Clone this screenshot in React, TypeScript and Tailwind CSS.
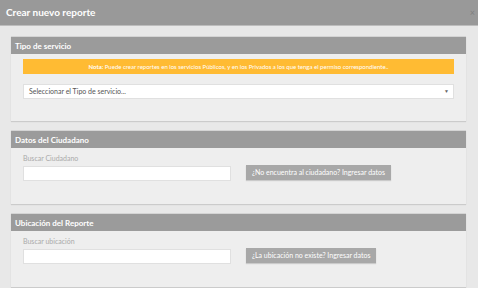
import { useState } from "react";

const font = { fontFamily: "Lato, 'Open Sans', sans-serif" };

function Panel({ title, children }: { title: string; children: React.ReactNode }) {
  return (
    <div className="border-t border-[#d4d4d4] bg-[#eeeeee] shadow-[0_1px_1px_rgba(0,0,0,0.12)]">
      <div className="flex h-[17px] items-center bg-[#9b9b9b] px-[4px] text-[8px] font-bold text-white">{title}</div>
      {children}
    </div>
  );
}

function SearchRow({ label, button }: { label: string; button: string }) {
  const [value, setValue] = useState("");
  return (
    <div className="px-[12px] pb-[23px] pt-[4px]">
      <p className="h-[12px] text-[7px] leading-[12px] text-[#aaaaaa]">{label}</p>
      <div className="mt-[2px] flex items-start gap-[15px]">
        <input
          className="h-[15px] w-[208px] border border-[#e0e0e0] bg-white px-[4px] text-[7px] outline-none"
          value={value}
          onChange={(event) => setValue(event.target.value)}
        />
        <button
          className="-mt-[1px] h-[15px] bg-[#a8a8a8] px-[6px] text-[7px] text-white shadow-[0_1px_1px_rgba(0,0,0,0.15)]"
          type="button"
        >
          {button}
        </button>
      </div>
    </div>
  );
}

export default function App() {
  return (
    <div className="h-[288px] w-[478px] overflow-hidden bg-[#e8e8e8]" style={font}>
      <div className="flex h-[26px] items-center justify-between border-b border-[#bdbdbd] bg-[#999999] pl-[6px] pr-[3px]">
        <h1 className="text-[10px] font-bold text-white">Crear nuevo reporte</h1>
        <span className="text-[9px] leading-none text-[#808080]">×</span>
      </div>

      <div className="mr-[12px] ml-[11px] mt-[10px] flex flex-col gap-[9px]">
        <Panel title="Tipo de servicio">
          <div className="px-[12px] pb-[22px] pt-[5px]">
            <div className="flex h-[15px] items-center justify-center bg-[#ffbb33] text-[6px] text-white">
              <span className="font-bold">Nota:</span>&nbsp;Puede crear reportes en los servicios Públicos, y en los
              Privados a los que tenga el permiso correspondiente..
            </div>
            <div className="mt-[10px] flex h-[15px] items-center justify-between border border-[#e0e0e0] bg-white pl-[5px] pr-[4px] text-[7px] text-[#555555]">
              <span>Seleccionar el Tipo de servicio...</span>
              <span className="text-[5px] text-[#666666]">▼</span>
            </div>
          </div>
        </Panel>

        <Panel title="Datos del Ciudadano">
          <SearchRow label="Buscar Ciudadano" button="¿No encuentra al ciudadano? Ingresar datos" />
        </Panel>

        <Panel title="Ubicación del Reporte">
          <SearchRow label="Buscar ubicación" button="¿La ubicación no existe? Ingresar datos" />
        </Panel>
      </div>
    </div>
  );
}
